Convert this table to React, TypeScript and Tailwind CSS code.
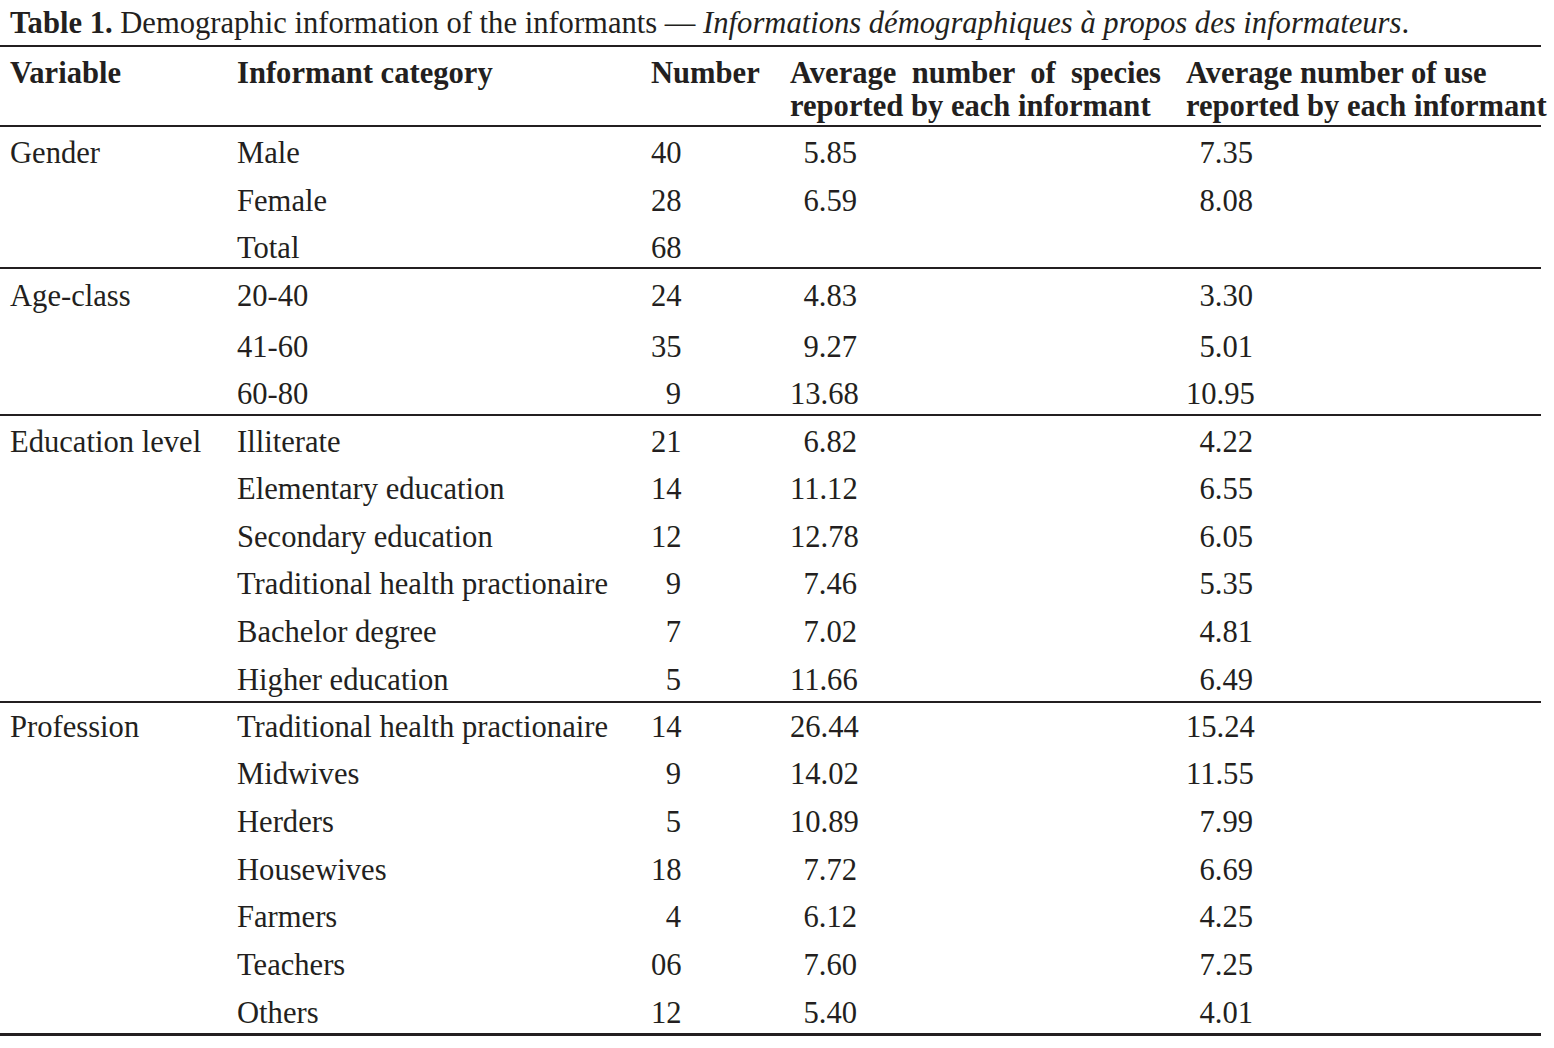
type Row = {
  label: string;
  count: string;
  species: string;
  uses: string;
  h: string;
};

type Section = {
  variable: string;
  pad: string;
  rows: Row[];
};

const sections: Section[] = [
  {
    variable: "Gender",
    pad: "pt-[2.5px]",
    rows: [
      { label: "Male", count: "40", species: "5.85", uses: "7.35", h: "h-[48px]" },
      { label: "Female", count: "28", species: "6.59", uses: "8.08", h: "h-[47px]" },
      { label: "Total", count: "68", species: "", uses: "", h: "h-[42.5px]" },
    ],
  },
  {
    variable: "Age-class",
    pad: "pt-[3.5px]",
    rows: [
      { label: "20-40", count: "24", species: "4.83", uses: "3.30", h: "h-[51px]" },
      { label: "41-60", count: "35", species: "9.27", uses: "5.01", h: "h-[47px]" },
      { label: "60-80", count: "9", species: "13.68", uses: "10.95", h: "h-[43.5px]" },
    ],
  },
  {
    variable: "Education level",
    pad: "pt-[2.5px]",
    rows: [
      { label: "Illiterate", count: "21", species: "6.82", uses: "4.22", h: "h-[47px]" },
      { label: "Elementary education", count: "14", species: "11.12", uses: "6.55", h: "h-[48px]" },
      { label: "Secondary education", count: "12", species: "12.78", uses: "6.05", h: "h-[47px]" },
      { label: "Traditional health practionaire", count: "9", species: "7.46", uses: "5.35", h: "h-[48px]" },
      { label: "Bachelor degree", count: "7", species: "7.02", uses: "4.81", h: "h-[48px]" },
      { label: "Higher education", count: "5", species: "11.66", uses: "6.49", h: "h-[44.5px]" },
    ],
  },
  {
    variable: "Profession",
    pad: "pt-[1px]",
    rows: [
      { label: "Traditional health practionaire", count: "14", species: "26.44", uses: "15.24", h: "h-[47px]" },
      { label: "Midwives", count: "9", species: "14.02", uses: "11.55", h: "h-[48px]" },
      { label: "Herders", count: "5", species: "10.89", uses: "7.99", h: "h-[48px]" },
      { label: "Housewives", count: "18", species: "7.72", uses: "6.69", h: "h-[47px]" },
      { label: "Farmers", count: "4", species: "6.12", uses: "4.25", h: "h-[48px]" },
      { label: "Teachers", count: "06", species: "7.60", uses: "7.25", h: "h-[48px]" },
      { label: "Others", count: "12", species: "5.40", uses: "4.01", h: "h-[42.5px]" },
    ],
  },
];

const cols = "grid grid-cols-[237px_414px_139px_396px_355px]";

export default function App() {
  return (
    <div className="min-h-screen bg-white text-[#231f20] font-['Liberation_Serif',serif] text-[30.6px]">
      <div className="w-[1541px]">
        <div className="h-[45px] pt-[2px] pl-[10px] leading-[43px] whitespace-nowrap">
          <span className="font-bold">Table 1.</span> Demographic information of the informants —{" "}
          <span className="italic">Informations démographiques à propos des informateurs</span>.
        </div>

        <div className={`${cols} border-t-2 border-b-2 border-[#231f20] pt-[10px] pb-[2px] font-bold leading-[33px] whitespace-nowrap`}>
          <div className="pl-[10px]">Variable</div>
          <div>Informant category</div>
          <div>Number</div>
          <div>
            <div className="w-[371px] text-justify [text-align-last:justify]">Average number of species</div>
            <div>reported by each informant</div>
          </div>
          <div>
            Average number of use
            <br />
            reported by each informant
          </div>
        </div>

        {sections.map((section, si) => (
          <div
            key={section.variable}
            className={`${section.pad} ${
              si === sections.length - 1 ? "border-b-[3px]" : "border-b-2"
            } border-[#231f20]`}
          >
            {section.rows.map((row, ri) => (
              <div key={row.label + ri} className={`${cols} ${row.h} leading-[47px] whitespace-nowrap`}>
                <div className="pl-[10px]">{ri === 0 ? section.variable : ""}</div>
                <div>{row.label}</div>
                <div>
                  <div className="w-[30px] text-right">{row.count}</div>
                </div>
                <div>
                  <div className="w-[67px] text-right">{row.species}</div>
                </div>
                <div>
                  <div className="w-[67px] text-right">{row.uses}</div>
                </div>
              </div>
            ))}
          </div>
        ))}
      </div>
    </div>
  );
}
